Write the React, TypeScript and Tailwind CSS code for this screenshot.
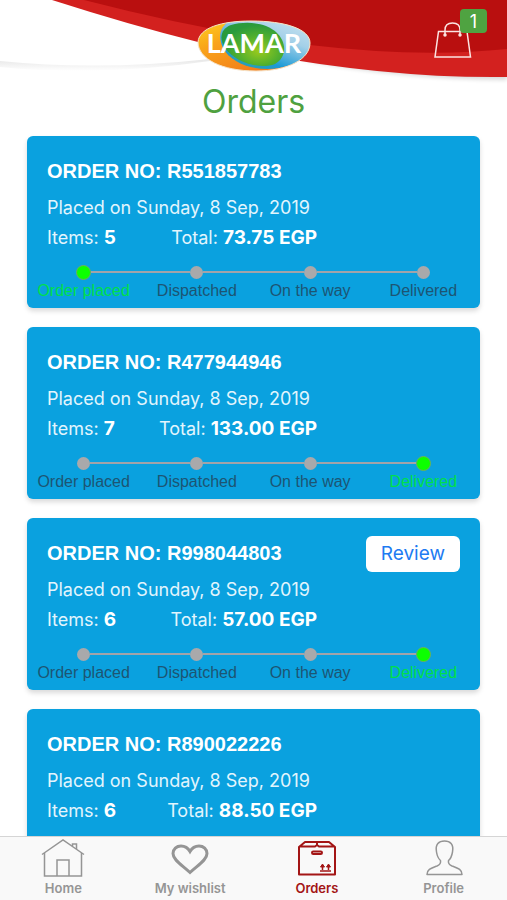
import React from "react";

const STEPS = ["Order placed", "Dispatched", "On the way", "Delivered"];

type Order = {
  id: string;
  date: string;
  items: number;
  total: string;
  step: number;
  review?: boolean;
};

const ORDERS: Order[] = [
  { id: "R551857783", date: "Sunday, 8 Sep, 2019", items: 5, total: "73.75 EGP", step: 0 },
  { id: "R477944946", date: "Sunday, 8 Sep, 2019", items: 7, total: "133.00 EGP", step: 3 },
  { id: "R998044803", date: "Sunday, 8 Sep, 2019", items: 6, total: "57.00 EGP", step: 3, review: true },
  { id: "R890022226", date: "Sunday, 8 Sep, 2019", items: 6, total: "88.50 EGP", step: 3 },
];

function Progress({ current }: { current: number }) {
  return (
    <ol className="mt-[14px] grid grid-cols-4">
      {STEPS.map((label, i) => (
        <li key={label} className="flex flex-col items-center">
          <span className="flex h-4 w-full items-center">
            <span className={`h-[2px] flex-1 ${i === 0 ? "" : "bg-[#a3a3a8]"}`} />
            <span
              className={`rounded-full ${
                i === current ? "size-[15px] border border-[#6fae5c] bg-[#0cff00]" : "size-[13px] bg-[#a9a9ab]"
              }`}
            />
            <span className={`h-[2px] flex-1 ${i === STEPS.length - 1 ? "" : "bg-[#a3a3a8]"}`} />
          </span>
          <span
            className={`mt-[2px] whitespace-nowrap text-[16px] leading-[18px] ${
              i === current ? "text-[#00e04a]" : "text-[#1d5573]"
            }`}
          >
            {label}
          </span>
        </li>
      ))}
    </ol>
  );
}

function OrderCard({ order }: { order: Order }) {
  return (
    <article className="rounded-md bg-[#0aa1df] pt-[23px] pb-2 font-['Liberation_Sans',Arial,sans-serif] text-white shadow-[0_3px_5px_rgba(0,0,0,0.15)]">
      <div className="flex items-start justify-between px-5">
        <div className="w-[270px] font-['Inter',sans-serif] text-[18px] leading-6">
          <h2 className="font-['Liberation_Sans',Arial,sans-serif] text-[20px] leading-6 font-bold">
            ORDER NO: {order.id}
          </h2>
          <p className="mt-[13px] text-[#e2f5fd]">Placed on {order.date}</p>
          <p className="mt-[6px] flex h-6 justify-between text-[#e2f5fd]">
            <span>
              Items: <b className="text-[19px] font-bold text-white">{order.items}</b>
            </span>
            <span>
              Total: <b className="text-[19px] font-bold text-white">{order.total}</b>
            </span>
          </p>
        </div>
        {order.review && (
          <button
            type="button"
            className="-mt-[5px] h-9 rounded-md bg-white px-[15px] font-['Inter',sans-serif] text-[19px] leading-6 text-[#1d7bf2]"
          >
            Review
          </button>
        )}
      </div>
      <Progress current={order.step} />
    </article>
  );
}

const OVAL = "M1 22C2 8 24 1 54 1c34 0 59 8 59 22 0 16-22 28-54 28C25 51 1 39 1 22Z";

function Logo() {
  return (
    <svg viewBox="0 0 114 52" className="h-[52px] w-[114px]" role="img" aria-label="Lamar">
      <defs>
        <linearGradient id="orange" x1="0" y1="0" x2="0.8" y2="1">
          <stop offset="0" stopColor="#ffd21f" />
          <stop offset="0.35" stopColor="#f9a51a" />
          <stop offset="1" stopColor="#f0701a" />
        </linearGradient>
        <linearGradient id="blue" x1="1" y1="0" x2="0.3" y2="1">
          <stop offset="0" stopColor="#cfe6f2" />
          <stop offset="0.4" stopColor="#a3d0e8" />
          <stop offset="0.8" stopColor="#1c9ad6" />
          <stop offset="1" stopColor="#2a9fb0" />
        </linearGradient>
        <radialGradient id="green" cx="0.6" cy="0.65" r="0.6">
          <stop offset="0" stopColor="#9ccb1c" />
          <stop offset="0.55" stopColor="#52b02e" />
          <stop offset="1" stopColor="#2a9b3c" />
        </radialGradient>
        <clipPath id="oval">
          <path d={OVAL} />
        </clipPath>
      </defs>
      <g clipPath="url(#oval)">
        <rect width="114" height="52" fill="url(#orange)" />
        <path d="M34 0H114V40L82 48C60 52 34 44 26 28C20 14 24 6 34 0Z" fill="url(#blue)" />
        <path d="M34 5C48 1 68 2 79 12C90 22 90 37 78 44C62 50 38 42 28 28C21 17 25 8 34 5Z" fill="url(#green)" />
      </g>
      <path d={OVAL} fill="none" stroke="#f6e3c8" />
      <text
        x="57"
        y="33"
        textAnchor="middle"
        fill="#fff"
        className="font-['Lato',sans-serif] text-[27px] font-bold"
      >
        LAMAR
      </text>
    </svg>
  );
}

function Header() {
  return (
    <header className="relative flex h-[84px] shrink-0 items-start justify-center pt-[20px]">
      <svg
        viewBox="0 0 507 90"
        preserveAspectRatio="none"
        className="absolute inset-x-0 top-0 h-[90px] w-full"
        aria-hidden="true"
      >
        <defs>
          <filter id="soft" x="-5%" y="-20%" width="110%" height="150%">
            <feGaussianBlur stdDeviation="2" />
          </filter>
          <linearGradient id="fold" x1="0" y1="0" x2="0" y2="1">
            <stop offset="0" stopColor="#e6e6e6" />
            <stop offset="1" stopColor="#ffffff" />
          </linearGradient>
        </defs>
        <path d="M0 61Q100 71 210 59V61Q100 77 0 67Z" fill="url(#fold)" />
        <path d="M300 60Q400 79 507 80V60Z" fill="#000" opacity="0.15" filter="url(#soft)" />
        <path d="M52 0Q130 25 198 42Q370 79 507 77V0Z" fill="#d3211f" />
        <path d="M84 0Q200 30 310 45Q420 58 507 49V0Z" fill="#b90f0f" />
      </svg>
      <div className="relative">
        <Logo />
      </div>
      <button type="button" aria-label="Shopping bag, 1 item" className="absolute top-[8px] right-5 h-[52px] w-[54px]">
        <svg viewBox="0 0 54 52" className="h-[52px] w-[54px]" fill="none" stroke="#fbe4e2" strokeWidth="1.5" aria-hidden="true">
          <path d="M5.500 23.500H34L37.500 49H2Z" />
          <path d="M12 27V22Q12 15 19.500 15T27 22V27" />
          <circle cx="12" cy="27" r="1" fill="#fff" />
          <circle cx="27" cy="27" r="1" fill="#fff" />
        </svg>
        <span className="absolute top-[1px] right-0 flex h-6 w-[27px] items-center justify-center rounded bg-[#4fa341] font-['Inter',sans-serif] text-[18px] text-white">
          1
        </span>
      </button>
    </header>
  );
}

function HomeIcon() {
  return (
    <svg viewBox="0 0 44 40" className="h-10 w-11" fill="none" stroke="currentColor" strokeWidth="1.5" aria-hidden="true">
      <path d="M1 16.500 22 2l21 14.500" />
      <path d="M3.500 15V38H40.500V15M16 38V22H28V38M31.500 8V6h4v5" />
    </svg>
  );
}

function HeartIcon() {
  return (
    <svg viewBox="0 0 44 40" className="h-10 w-11" fill="none" stroke="currentColor" strokeWidth="3" aria-hidden="true">
      <path d="M22 34.500C14 27 5 22 5 15.500 5 11 8.500 8 13 8c4 0 7 2 9 5.500C24 10 27 8 31 8c4.500 0 8 3 8 7.500C39 22 30 27 22 34.500Z" />
    </svg>
  );
}

function BoxIcon() {
  return (
    <svg viewBox="0 0 44 40" className="h-10 w-11" fill="none" stroke="currentColor" strokeWidth="2" strokeLinejoin="round" aria-hidden="true">
      <path d="M4 9V36.500H40V9L34 4H10ZM4 8.500H20L22 7L24 8.500H40M22 4V7" />
      <rect x="17" y="13.500" width="10" height="2.500" rx="1.200" />
      <path d="M25 33H36M27.500 32V27M33.500 32V27" strokeWidth="1.500" />
      <path d="M25.500 29 27.500 26l2 3ZM31.500 29l2-3 2 3Z" fill="currentColor" strokeWidth="1" />
    </svg>
  );
}

function ProfileIcon() {
  return (
    <svg viewBox="0 0 44 40" className="h-10 w-11" fill="none" stroke="currentColor" strokeWidth="1.500" strokeLinejoin="round" aria-hidden="true">
      <path d="M5 36.500C5 31 10 30 15 28c3-1.300 4-3 3.500-5.500C15.500 20 15 17 14.500 14 13 6 17 3 22.500 3S32 6 30.500 14c-.5 3-1 6-4 8.500C26 25 27 26.700 30 28c5 2 10 3 10 8.500Z" />
    </svg>
  );
}

const TABS = [
  { label: "Home", Icon: HomeIcon },
  { label: "My wishlist", Icon: HeartIcon },
  { label: "Orders", Icon: BoxIcon, active: true },
  { label: "Profile", Icon: ProfileIcon },
];

export default function App() {
  return (
    <div className="flex h-screen flex-col overflow-hidden bg-white">
      <Header />
      <h1 className="shrink-0 text-center font-['Inter',sans-serif] text-[32px] leading-9 text-[#4fa13f]">Orders</h1>
      <main className="flex min-h-0 flex-1 flex-col gap-[19px] overflow-y-auto px-[27px] pt-4 pb-5 [scrollbar-width:none] *:shrink-0">
        {ORDERS.map((order) => (
          <OrderCard key={order.id} order={order} />
        ))}
      </main>
      <nav className="grid h-16 shrink-0 grid-cols-4 border-t border-[#d5d5d5] bg-[#f9f9f9]">
        {TABS.map(({ label, Icon, active }) => (
          <a
            key={label}
            href="#"
            aria-current={active ? "page" : undefined}
            className={`flex flex-col items-center gap-[2px] pt-[1px] font-['Inter',sans-serif] text-[13px] leading-4 font-semibold ${
              active ? "text-[#a31515]" : "text-[#959595]"
            }`}
          >
            <Icon />
            <span>{label}</span>
          </a>
        ))}
      </nav>
    </div>
  );
}
